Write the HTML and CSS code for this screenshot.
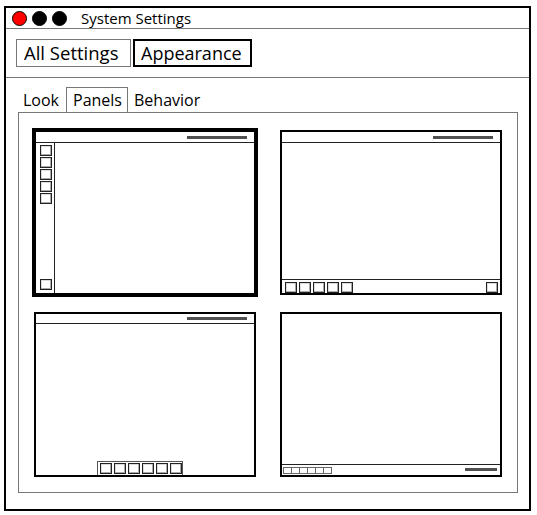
FILE: index.html
```html
<!DOCTYPE html>
<html>
<head>
<meta charset="utf-8">
<title>System Settings</title>
<link rel="stylesheet" href="styles.css">
</head>
<body>
<div class="window">
  <div class="titlebar">
    <span class="dot dot-red"></span>
    <span class="dot"></span>
    <span class="dot"></span>
    <span class="title">System Settings</span>
  </div>
  <div class="header">
    <div class="crumb">All Settings</div>
    <div class="crumb crumb-active">Appearance</div>
  </div>
  <div class="tabs">
    <div class="tab">Look</div>
    <div class="tab tab-active">Panels</div>
    <div class="tab">Behavior</div>
  </div>
  <div class="frame">
    <div class="grid">
      <div class="preview selected">
        <div class="topbar"><span class="bar"></span></div>
        <div class="body row">
          <div class="sidebar">
            <span class="sq"></span><span class="sq"></span><span class="sq"></span><span class="sq"></span><span class="sq"></span>
            <span class="sq sq-end"></span>
          </div>
        </div>
      </div>
      <div class="preview">
        <div class="topbar"><span class="bar"></span></div>
        <div class="body"></div>
        <div class="bottombar">
          <span class="sq"></span><span class="sq"></span><span class="sq"></span><span class="sq"></span><span class="sq"></span>
          <span class="sq sq-right"></span>
        </div>
      </div>
      <div class="preview">
        <div class="topbar topbar-thin"><span class="bar bar-thin"></span></div>
        <div class="body"></div>
        <div class="dock">
          <span class="sq"></span><span class="sq"></span><span class="sq"></span><span class="sq"></span><span class="sq"></span><span class="sq"></span>
        </div>
      </div>
      <div class="preview">
        <div class="body"></div>
        <div class="minibar">
          <span class="msq"></span><span class="msq"></span><span class="msq"></span><span class="msq"></span><span class="msq"></span><span class="msq"></span>
          <span class="bar bar-small"></span>
        </div>
      </div>
    </div>
  </div>
</div>
</body>
</html>
```
FILE: styles.css
```css
* { box-sizing: border-box; }
html, body { margin: 0; padding: 0; background: #fff; }
body {
  font-family: "Open Sans", "DejaVu Sans", sans-serif;
  color: #000;
}
.window {
  margin: 6px 0 0 4px;
  width: 527px;
  height: 505px;
  border: 2px solid #000;
  display: flex;
  flex-direction: column;
}
.titlebar {
  height: 21px;
  border-bottom: 1px solid #777;
  display: flex;
  align-items: center;
  padding-left: 6px;
  gap: 5px;
}
.dot {
  width: 15px;
  height: 15px;
  border-radius: 50%;
  background: #000;
  border: 1px solid #000;
}
.dot-red { background: #ff0000; }
.title {
  margin-left: 9px;
  font-size: 15px;
  line-height: 20px;
}
.header {
  height: 49px;
  border-bottom: 1px solid #777;
  padding: 10px 0 0 10px;
  display: flex;
  gap: 2px;
}
.crumb {
  height: 28px;
  border: 1px solid #777;
  font-size: 18.5px;
  line-height: 26px;
  padding: 0 7px;
  white-space: nowrap;
}
.crumb:first-child { width: 115px; }
.crumb-active {
  width: 119px;
  border: 2px solid #000;
  font-size: 18px;
  line-height: 24px;
  padding: 0 6px;
}
.tabs {
  height: 35px;
  margin: 0 0 -1px 12px;
  padding-top: 9px;
  display: flex;
  position: relative;
  z-index: 1;
}
.tab {
  height: 25px;
  font-size: 16px;
  line-height: 24px;
  padding: 0 6px 0 4px;
  border: 1px solid transparent;
  border-bottom: none;
}
.tab-active {
  border-color: #777;
  background: #fff;
  width: 62px;
  padding: 0 6px;
}
.tab:last-child { padding-left: 5px; }
.frame {
  height: 381px;
  margin: 0 11px 16px 12px;
  border: 1px solid #777;
}
.grid {
  display: grid;
  grid-template-columns: 222px 222px;
  grid-template-rows: 165px 165px;
  column-gap: 24px;
  row-gap: 17px;
  padding: 17px 0 0 15px;
}
.preview {
  border: 2px solid #000;
  display: flex;
  flex-direction: column;
  background: #fff;
}
.preview.selected { box-shadow: 0 0 0 2px #000; }
.topbar {
  height: 11px;
  border-bottom: 1px solid #222;
  display: flex;
  justify-content: flex-end;
  padding: 4px 7px 0 0;
}
.topbar-thin { height: 10px; padding-top: 3px; }
.bar {
  width: 60px;
  height: 3px;
  background: #505050;
}
.body { flex: 1; }
.row { display: flex; }
.sidebar {
  width: 19px;
  border-right: 1px solid #222;
  padding: 2px 0 3px 4px;
  display: flex;
  flex-direction: column;
  gap: 1px;
}
.sq {
  width: 12px;
  height: 11px;
  border: 1px solid #222;
  box-shadow: inset -1px -1px 0 #aaa, inset 1px 1px 0 #ddd;
  flex: none;
}
.sq-end { margin-top: auto; }
.bottombar {
  height: 14px;
  border-top: 1px solid #222;
  display: flex;
  gap: 2px;
  padding: 2px 2px 0 3px;
}
.sq-right { margin-left: auto; }
.dock {
  width: 86px;
  height: 14px;
  margin-left: 61px;
  border: 1px solid #555;
  border-bottom: none;
  display: flex;
  gap: 2px;
  padding: 1px 1px 0 2px;
}
.minibar {
  height: 11px;
  border-top: 1px solid #222;
  display: flex;
  align-items: flex-start;
  padding: 2px 3px 0 1px;
}
.msq {
  width: 9px;
  height: 7px;
  border: 1px solid #666;
  margin-right: -1px;
}
.msq:nth-child(6) { margin-right: 0; }
.bar-small {
  width: 32px;
  margin: 1px 0 0 auto;
}
```
